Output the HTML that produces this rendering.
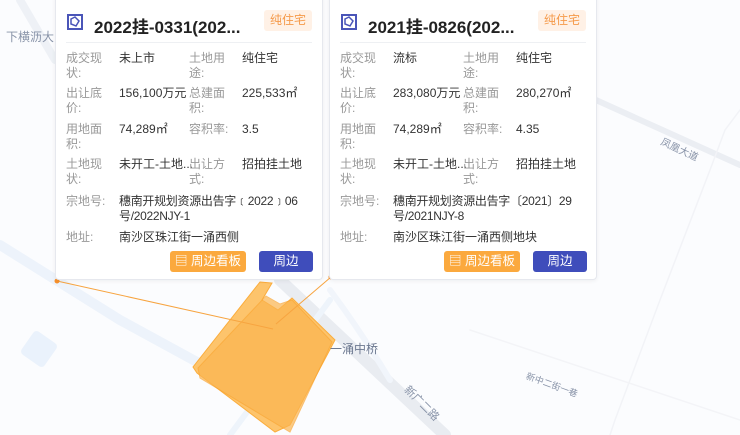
<!DOCTYPE html>
<html><head><meta charset="utf-8"><style>
*{margin:0;padding:0;box-sizing:border-box}
body{width:740px;height:435px;overflow:hidden;background:#fbfcfe;font-family:"Liberation Sans","Noto Sans CJK SC",sans-serif;position:relative}
svg.map{position:absolute;left:0;top:0}
.card{position:absolute;top:-6px;width:268px;height:286px;background:#fff;border:1px solid #e6e8ee;border-radius:4px;box-shadow:0 1px 4px rgba(0,0,0,.06)}
.hd{position:absolute;left:10px;top:12px;right:10px;height:36px;border-bottom:1px solid #eef0f3}
.hd .t{position:absolute;left:28px;top:6px;font-size:17px;font-weight:bold;color:#222;white-space:nowrap}
.hd .ic{position:absolute;left:1px;top:7px;width:16px;height:16px}
.tag{position:absolute;right:0;top:3px;width:48px;height:21px;background:#fff1e6;color:#f59a4a;font-size:12px;text-align:center;line-height:21px;border-radius:3px}
.r{position:absolute;font-size:12px;line-height:15px;color:#333;white-space:nowrap}
.l{color:#999}
.btn{position:absolute;top:256px;height:21px;border-radius:3px;color:#fff;font-size:12.5px;text-align:center;line-height:21px}
.b1{background:#fba93e;width:76px}
.b2{background:#3f4dbb;width:54px}
.lbl{position:absolute;font-size:11px;color:#8893a8;white-space:nowrap}
</style></head><body>
<svg class="map" width="740" height="435">
<g fill="none" stroke-linecap="round">
<path d="M20 0 L55 60" stroke="#eef1f6" stroke-width="8"/>
<path d="M0 245 L120 320 L230 380" stroke="#edf3fb" stroke-width="10"/>
<path d="M280 280 L445 435" stroke="#e9ecf1" stroke-width="12"/>
<path d="M330 290 Q360 330 390 380" stroke="#f1f5fb" stroke-width="6"/>
<path d="M596 100 L740 165" stroke="#ebeef3" stroke-width="6"/>
<path d="M740 110 L725 130 L710 170 L660 300 L615 420 L610 435" stroke="#f2f3f7" stroke-width="1.5"/>
<path d="M470 330 L740 420" stroke="#f3f4f7" stroke-width="1.5"/>
<path d="M230 435 L330 300" stroke="#eef4fb" stroke-width="6"/>
</g>
<rect x="25" y="335" width="28" height="28" rx="4" fill="#eaf2fc" transform="rotate(35 39 349)"/>
<polygon points="260,282 272,283 262,300 278,310 292,298 335,340 290,425 275,432 197,373 193,367" fill="#fdc46c" stroke="#fbad3c" stroke-width="1"/>
<polygon points="266,296 280,304 292,300 332,342 290,432 200,378 198,368" fill="#fbb550" opacity=".7" stroke="#f9a532"/>
<line x1="57" y1="281" x2="273" y2="329" stroke="#f7a440" stroke-width="1"/>
<line x1="331" y1="277" x2="276" y2="324" stroke="#f7a440" stroke-width="1"/>
<circle cx="57" cy="281" r="2.5" fill="#f7912c"/>
<circle cx="331" cy="277" r="2.5" fill="#f7912c"/>
</svg>
<div class="lbl" style="left:6px;top:28px;font-size:12px">下横沥大</div>
<div class="lbl" style="left:330px;top:340px;font-size:12px;color:#6c7890">一涌中桥</div>
<div class="lbl" style="left:400px;top:395px;transform:rotate(45deg)">新广二路</div>
<div class="lbl" style="left:525px;top:378px;transform:rotate(20deg);font-size:9px">新中二街一巷</div>
<div class="lbl" style="left:660px;top:141px;transform:rotate(25deg);font-size:10px">凤凰大道</div>

<div class="card" style="left:55px">
 <div class="hd"><svg class="ic" viewBox="0 0 16 16"><rect x="1" y="1" width="14" height="14" fill="none" stroke="#4a55b8" stroke-width="2"/><path d="M4 5 L8 3 L12 7 L9 12 L4 10Z" fill="none" stroke="#4a55b8" stroke-width="1.5"/></svg><div class="t">2022挂-0331(202...</div><div class="tag">纯住宅</div></div>
 <div class="r l" style="left:10px;top:56px">成交现<br>状:</div><div class="r" style="left:63px;top:56px">未上市</div><div class="r l" style="left:133px;top:56px">土地用<br>途:</div><div class="r" style="left:186px;top:56px">纯住宅</div>
 <div class="r l" style="left:10px;top:91px">出让底<br>价:</div><div class="r" style="left:63px;top:91px">156,100万元</div><div class="r l" style="left:133px;top:91px">总建面<br>积:</div><div class="r" style="left:186px;top:91px">225,533㎡</div>
 <div class="r l" style="left:10px;top:127px">用地面<br>积:</div><div class="r" style="left:63px;top:127px">74,289㎡</div><div class="r l" style="left:133px;top:127px">容积率:</div><div class="r" style="left:186px;top:127px">3.5</div>
 <div class="r l" style="left:10px;top:162px">土地现<br>状:</div><div class="r" style="left:63px;top:162px">未开工-土地...</div><div class="r l" style="left:133px;top:162px">出让方<br>式:</div><div class="r" style="left:186px;top:162px">招拍挂土地</div>
 <div class="r l" style="left:10px;top:199px">宗地号:</div><div class="r" style="left:63px;top:199px;letter-spacing:-.3px">穗南开规划资源出告字﹝2022﹞06<br>号/2022NJY-1</div>
 <div class="r l" style="left:10px;top:235px">地址:</div><div class="r" style="left:63px;top:235px">南沙区珠江街一涌西侧</div>
 <div class="btn b1" style="left:114px">▤ 周边看板</div><div class="btn b2" style="left:203px">周边</div>
</div>

<div class="card" style="left:329px">
 <div class="hd"><svg class="ic" viewBox="0 0 16 16"><rect x="1" y="1" width="14" height="14" fill="none" stroke="#4a55b8" stroke-width="2"/><path d="M4 5 L8 3 L12 7 L9 12 L4 10Z" fill="none" stroke="#4a55b8" stroke-width="1.5"/></svg><div class="t">2021挂-0826(202...</div><div class="tag">纯住宅</div></div>
 <div class="r l" style="left:10px;top:56px">成交现<br>状:</div><div class="r" style="left:63px;top:56px">流标</div><div class="r l" style="left:133px;top:56px">土地用<br>途:</div><div class="r" style="left:186px;top:56px">纯住宅</div>
 <div class="r l" style="left:10px;top:91px">出让底<br>价:</div><div class="r" style="left:63px;top:91px">283,080万元</div><div class="r l" style="left:133px;top:91px">总建面<br>积:</div><div class="r" style="left:186px;top:91px">280,270㎡</div>
 <div class="r l" style="left:10px;top:127px">用地面<br>积:</div><div class="r" style="left:63px;top:127px">74,289㎡</div><div class="r l" style="left:133px;top:127px">容积率:</div><div class="r" style="left:186px;top:127px">4.35</div>
 <div class="r l" style="left:10px;top:162px">土地现<br>状:</div><div class="r" style="left:63px;top:162px">未开工-土地...</div><div class="r l" style="left:133px;top:162px">出让方<br>式:</div><div class="r" style="left:186px;top:162px">招拍挂土地</div>
 <div class="r l" style="left:10px;top:199px">宗地号:</div><div class="r" style="left:63px;top:199px;letter-spacing:-.3px">穗南开规划资源出告字〔2021〕29<br>号/2021NJY-8</div>
 <div class="r l" style="left:10px;top:235px">地址:</div><div class="r" style="left:63px;top:235px">南沙区珠江街一涌西侧地块</div>
 <div class="btn b1" style="left:114px">▤ 周边看板</div><div class="btn b2" style="left:203px">周边</div>
</div>
</body></html>
